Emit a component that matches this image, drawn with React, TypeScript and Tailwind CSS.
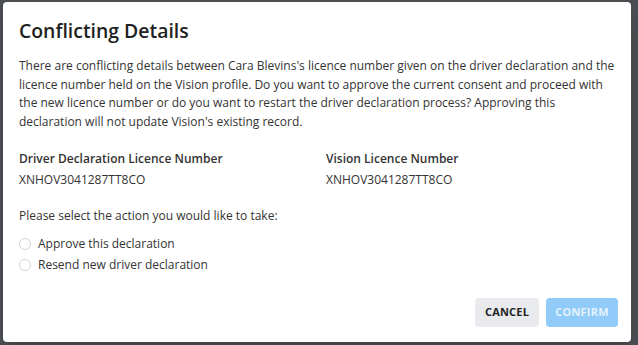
import React from "react";

export default function App() {
  const font = { fontFamily: '"Open Sans", "Noto Sans", sans-serif' };
  return (
    <div className="w-[638px] h-[345px] bg-[#4a4d51] overflow-hidden pl-[3px] pt-[2px]" style={font}>
      <div className="w-[628px] h-[340px] bg-white rounded-[4px] flex flex-col pl-4 pr-[13px] pt-[15px] pb-[15px] shadow-lg">
        <h1 className="text-[19.4px] leading-[28px] font-semibold text-[#212121]">Conflicting Details</h1>
        <p className="mt-[12px] -mr-px text-[12px] leading-[18.7px] text-[#333]">
          There are conflicting details between Cara Blevins's licence number given on the driver declaration and the licence number held on the Vision profile. Do you want to approve the current consent and proceed with the new licence number or do you want to restart the driver declaration process? Approving this declaration will not update Vision's existing record.
        </p>
        <div className="mt-[18px] grid grid-cols-[307px_1fr] text-[12px] text-[#333]">
          <div>
            <div className="leading-[18px] font-semibold text-[#333]">Driver Declaration Licence Number</div>
            <div className="mt-[3px] leading-[18px]">XNHOV3041287TT8CO</div>
          </div>
          <div>
            <div className="leading-[18px] font-semibold text-[#333]">Vision Licence Number</div>
            <div className="mt-[3px] leading-[18px]">XNHOV3041287TT8CO</div>
          </div>
        </div>
        <div className="mt-[18px] text-[12px] leading-[18px] text-[#333]">Please select the action you would like to take:</div>
        <div className="mt-[10px] flex flex-col gap-[3px] text-[12px] text-[#333]">
          {["Approve this declaration", "Resend new driver declaration"].map((l) => (
            <label key={l} className="flex items-center gap-[7px] leading-[18px]">
              <span className="w-[12px] h-[12px] rounded-full border border-[#d4d4d4] bg-white" />
              <span>{l}</span>
            </label>
          ))}
        </div>
        <div className="mt-auto flex justify-end gap-[7px]">
          <button className="w-[64px] h-[29px] rounded-[4px] bg-[#e8eaed] text-[11px] font-bold text-[#222] tracking-[0.2px]">CANCEL</button>
          <button className="w-[72px] h-[29px] rounded-[4px] bg-[#90cbf9] text-[11px] font-bold text-[#e3f2fd] tracking-[0.2px]">CONFIRM</button>
        </div>
      </div>
    </div>
  );
}
